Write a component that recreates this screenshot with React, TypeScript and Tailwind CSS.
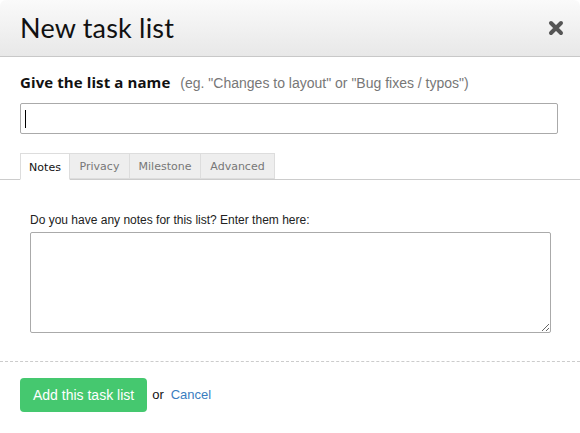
export default function App() {
  return (
    <div className="w-[580px] h-[433px] bg-white overflow-hidden">
      <div className="h-full rounded-md bg-white flex flex-col font-['Liberation_Sans',Arial,sans-serif]">
        {/* header */}
        <div className="h-[57px] shrink-0 rounded-t-md bg-gradient-to-b from-[#fafafa] to-[#e8e8e8] border-b border-[#c8c8c8] flex items-center justify-between pl-5 pr-[15px]">
          <h1 className="font-['Lato',sans-serif] text-[27px] text-[#111] tracking-[0.2px]">New task list</h1>
          <button className="w-[18px] h-[18px] flex items-center justify-center">
            <svg width="16" height="16" viewBox="0 0 16 16">
              <path d="M3 3 L13 13 M13 3 L3 13" stroke="#555" strokeWidth="4" strokeLinecap="round" />
            </svg>
          </button>
        </div>

        {/* name */}
        <div className="px-5 pt-[14px]">
          <div className="flex items-baseline gap-[10px]">
            <span className="font-['Open_Sans',sans-serif] font-bold text-[15px] text-[#111] tracking-[0.1px]">Give the list a name</span>
            <span className="text-[14px] text-[#777]">(eg. "Changes to layout" or "Bug fixes / typos")</span>
          </div>
          <div className="mt-[9px] h-[31px] w-[538px] border border-[#aaa] rounded-[2px] flex items-center pl-[4px]">
            <div className="w-px h-[18px] bg-black" />
          </div>
        </div>

        {/* tabs */}
        <div className="mt-[19px] border-b border-[#ccc] flex pl-5 font-['DejaVu_Sans',Verdana,sans-serif] text-[11px]">
          <div className="h-[27px] -mb-px w-[50px] justify-center flex items-center pt-[4px] bg-white border border-[#ddd] border-b-white text-[#111]">Notes</div>
          <div className="h-[26px] w-[60px] justify-center flex items-center pt-[3px] bg-[#eee] border border-l-0 border-[#ddd] text-[#777]">Privacy</div>
          <div className="h-[26px] w-[71px] justify-center flex items-center pt-[3px] bg-[#eee] border border-l-0 border-[#ddd] text-[#777]">Milestone</div>
          <div className="h-[26px] w-[74px] justify-center flex items-center pt-[3px] bg-[#eee] border border-l-0 border-[#ddd] text-[#777]">Advanced</div>
        </div>

        {/* notes */}
        <div className="px-[30px] pt-[33px]">
          <label className="block text-[12px] text-[#222] leading-[15px]">Do you have any notes for this list? Enter them here:</label>
          <textarea className="mt-[4px] block w-[521px] h-[101px] border border-[#aaa] rounded-[2px] resize-y" />
        </div>

        {/* footer */}
        <div className="mt-[28px] border-t border-dashed border-[#ccc] px-5 pt-[16px] flex items-center gap-[5px]">
          <button className="h-[34px] px-[13px] rounded-[4px] bg-[#45c86f] text-white text-[14px]">Add this task list</button>
          <span className="text-[13px] text-[#111]">or</span>
          <a className="ml-[2px] text-[13px] text-[#3a7dc0] cursor-pointer">Cancel</a>
        </div>
      </div>
    </div>
  );
}
